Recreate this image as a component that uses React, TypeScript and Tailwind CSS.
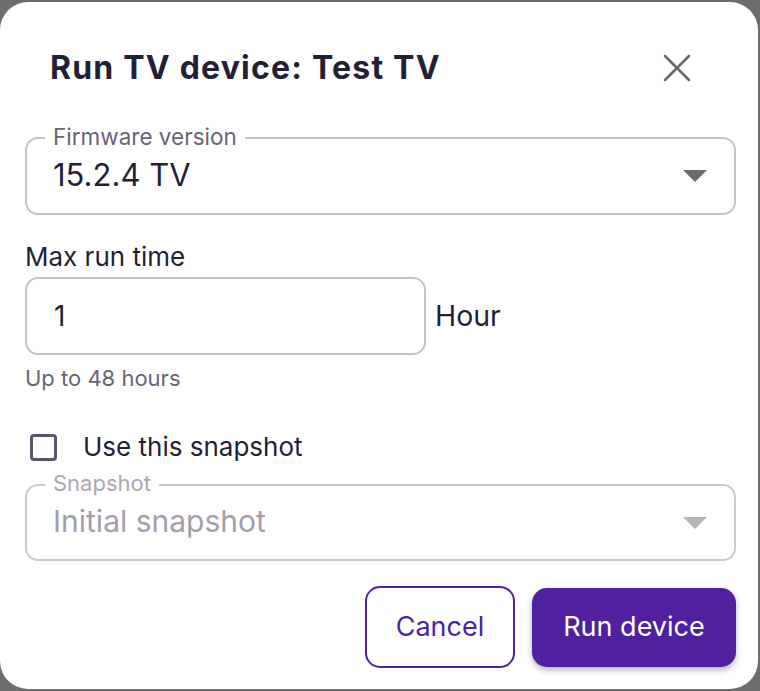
import { X } from 'lucide-react'

const font = { fontFamily: 'Inter, "Liberation Sans", sans-serif' }

function Caret({ muted = false }: { muted?: boolean }) {
  return (
    <svg width="24" height="12" viewBox="0 0 24 12" className="shrink-0">
      <path d="M0 0 L24 0 L12 12 Z" fill={muted ? '#b5b5b5' : '#6b6b6b'} />
    </svg>
  )
}

export default function App() {
  return (
    <div className="w-[760px] h-[691px] bg-[#6d6d6d] overflow-hidden pt-[2px]" style={font}>
      <div className="w-[758px] h-[687px] bg-white rounded-[28px] flex flex-col">
        {/* Title */}
        <div className="flex items-center justify-between pl-[50px] pr-[57px] pt-[42px]">
          <h1 className="text-[32px] leading-none font-bold text-[#231f36] tracking-[1.2px]">
            Run TV device: Test TV
          </h1>
          <X className="w-[48px] h-[48px] text-[#6b6b6b]" strokeWidth={1.3} />
        </div>

        <div className="pl-[25px] pr-[22px] flex flex-col">
          {/* Firmware version */}
          <div className="relative mt-[45px] h-[78px] border-2 border-[#c4c4c4] rounded-[13px] flex items-center pl-[26px] pr-[27px]">
            <span className="absolute -top-[14px] left-[18px] px-[8px] bg-white text-[22.5px] leading-[24px] text-[#686477]">
              Firmware version
            </span>
            <span className="flex-1 text-[31px] leading-none text-[#231f36] pb-[3px]">15.2.4 TV</span>
            <Caret />
          </div>

          {/* Max run time */}
          <label className="mt-[26px] text-[26px] leading-[32px] text-[#231f36]">Max run time</label>
          <div className="mt-[4px] flex items-center gap-[9px]">
            <div className="w-[401px] h-[78px] border-2 border-[#c4c4c4] rounded-[13px] flex items-center pl-[27px]">
              <span className="text-[28px] leading-none text-[#231f36]">1</span>
            </div>
            <span className="text-[28.5px] leading-none text-[#231f36]">Hour</span>
          </div>
          <p className="mt-[9px] text-[22px] leading-[28px] text-[#686477]">Up to 48 hours</p>

          {/* Checkbox */}
          <div className="mt-[40px] h-[30px] flex items-center gap-[26px] pl-[5px]">
            <span className="w-[27px] h-[27px] border-[3px] border-[#5b5670] rounded-[4px] shrink-0" />
            <span className="text-[26px] leading-[30px] text-[#231f36]">Use this snapshot</span>
          </div>

          {/* Snapshot (disabled) */}
          <div className="relative mt-[22px] h-[77px] border-2 border-[#cacaca] rounded-[13px] flex items-center pl-[26px] pr-[27px]">
            <span className="absolute -top-[15px] left-[18px] px-[8px] bg-white text-[22px] leading-[24px] text-[#aaa7b2]">
              Snapshot
            </span>
            <span className="flex-1 text-[30px] leading-none text-[#a29eac] pb-[3px]">Initial snapshot</span>
            <Caret muted />
          </div>

          {/* Actions */}
          <div className="mt-[25px] flex items-start justify-end gap-[17px]">
            <button className="w-[150px] h-[82px] border-2 border-[#4f22a0] rounded-[15px] text-[27px] text-[#4f22a0] bg-white">
              Cancel
            </button>
            <button className="w-[204px] h-[79px] mt-[2px] rounded-[15px] bg-[#4f20a0] text-white text-[27px] shadow-[0_3px_6px_rgba(0,0,0,0.3)]">
              Run device
            </button>
          </div>
        </div>
      </div>
    </div>
  )
}
